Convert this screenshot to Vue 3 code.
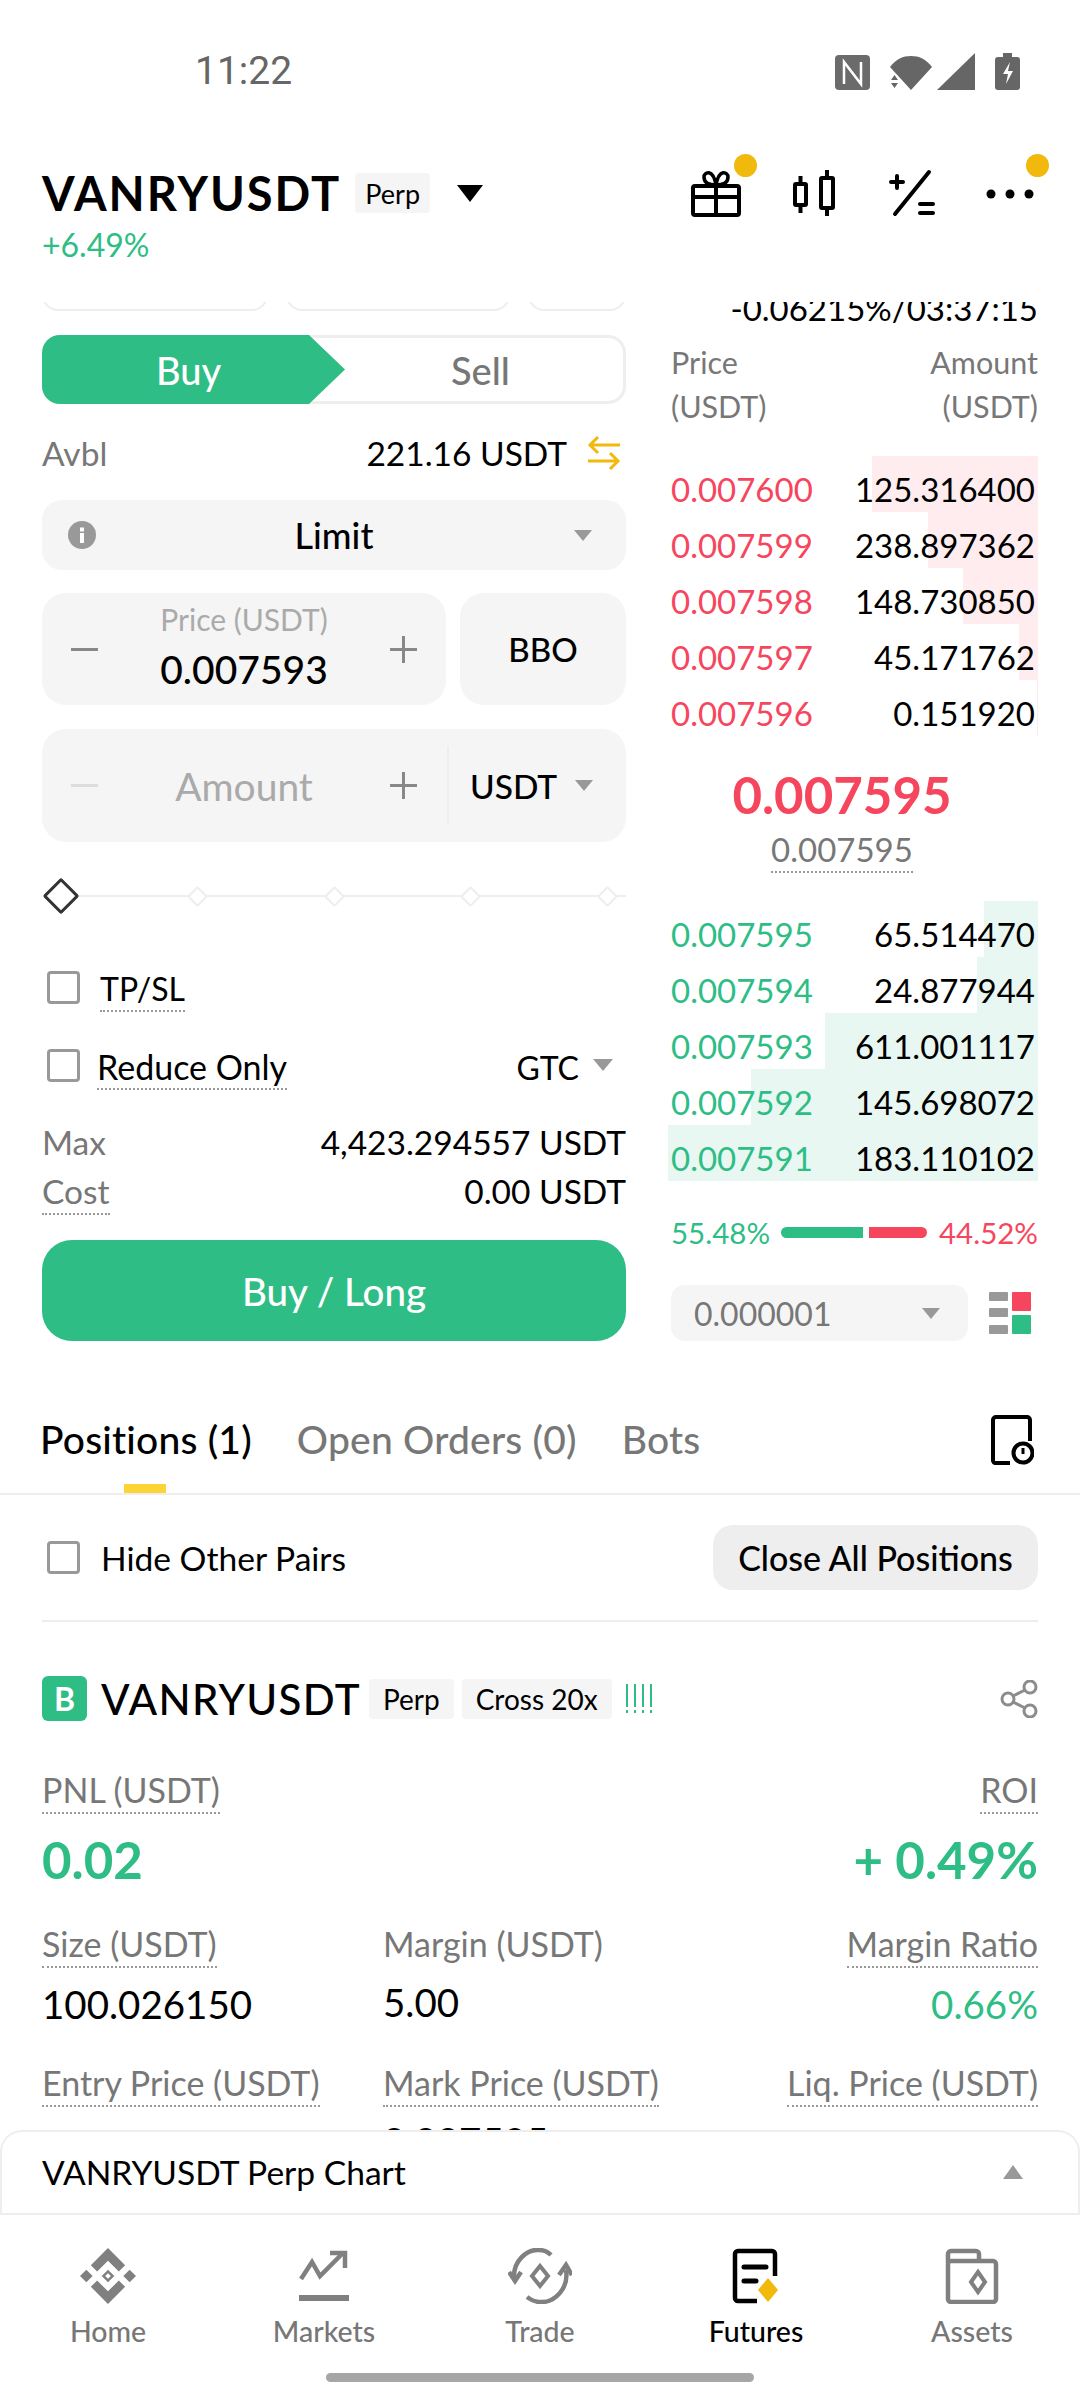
<script setup>
const asks = [
  { price: '0.007600', amount: '125.316400', depth: 166 },
  { price: '0.007599', amount: '238.897362', depth: 110 },
  { price: '0.007598', amount: '148.730850', depth: 75 },
  { price: '0.007597', amount: '45.171762', depth: 19 },
  { price: '0.007596', amount: '0.151920', depth: 1 },
]
const bids = [
  { price: '0.007595', amount: '65.514470', depth: 54 },
  { price: '0.007594', amount: '24.877944', depth: 61 },
  { price: '0.007593', amount: '611.001117', depth: 213 },
  { price: '0.007592', amount: '145.698072', depth: 287 },
  { price: '0.007591', amount: '183.110102', depth: 370 },
]
</script>

<template>
  <div class="screen">
    <header class="top">
      <div class="status">
        <span class="time">11:22</span>
        <div class="status-icons">
          <svg width="35" height="35" viewBox="0 0 35 35">
            <rect width="35" height="35" rx="4" fill="#6b6b6b" />
            <path d="M9 29V7l17 22V7" fill="none" stroke="#fff" stroke-width="2.500" />
          </svg>
          <svg class="wifi" width="42" height="35" viewBox="0 0 42 35">
            <path d="M0 12C6 4 13 1 21 1s15 3 21 11L21 35z" fill="#666" />
            <path d="M1 25l3.500-5 3.500 5zM1 28h7l-3.500 5z" fill="#666" />
          </svg>
          <svg class="signal" width="38" height="37" viewBox="0 0 38 37">
            <path d="M38 0v37H0z" fill="#666" />
          </svg>
          <svg class="battery" width="25" height="37" viewBox="0 0 25 37">
            <path d="M8 0h9v4h5a3 3 0 0 1 3 3v27a3 3 0 0 1-3 3H3a3 3 0 0 1-3-3V7a3 3 0 0 1 3-3h5z" fill="#666" />
            <path d="M15 9l-7 12h5l-2 10 7-13h-5z" fill="#fff" />
          </svg>
        </div>
      </div>
      <div class="title-row">
        <span class="pair">VANRYUSDT</span>
        <span class="tag tag-head">Perp</span>
        <span class="head-caret"></span>
        <div class="head-icons">
          <div class="head-icon">
            <svg class="gift" width="52" height="48" viewBox="0 0 52 48" fill="none" stroke="#000" stroke-width="4">
              <rect x="3" y="17" width="46" height="29" rx="2" />
              <path d="M3 28h46M26 10v36" />
              <path d="M26 16c-8 0-12-3-12-8s9-9 12 8c3-17 12-13 12-8s-4 8-12 8z" stroke-width="3.500" />
            </svg>
            <span class="dot dot-gift"></span>
          </div>
          <div class="head-icon">
            <svg width="48" height="48" viewBox="0 0 48 48" fill="none" stroke="#000" stroke-width="4">
              <rect x="5" y="15" width="11" height="21" rx="1" />
              <path d="M10.500 7v8M10.500 36v8" />
              <rect x="31" y="9" width="12" height="30" rx="1" />
              <path d="M37 1v8M37 39v8" />
            </svg>
          </div>
          <div class="head-icon">
            <svg width="48" height="48" viewBox="0 0 48 48" fill="none" stroke="#000" stroke-width="4" stroke-linecap="round">
              <path d="M41 3 7 45M9 7v12M3 13h12" />
              <path d="M32 35h13M32 44h13" stroke-width="4" />
            </svg>
          </div>
          <div class="head-icon">
            <svg width="48" height="48" viewBox="0 0 48 48" fill="#000">
              <circle cx="5" cy="25" r="4.500" />
              <circle cx="24" cy="25" r="4.500" />
              <circle cx="43" cy="25" r="4.500" />
            </svg>
            <span class="dot dot-more"></span>
          </div>
        </div>
      </div>
      <div class="change">+6.49%</div>
    </header>

    <main class="scroll">
      <div class="trade">
        <section class="form">
          <div class="chips">
            <span class="chip chip-a"></span>
            <span class="chip chip-b"></span>
            <span class="chip chip-c"></span>
          </div>
          <div class="side">
            <span class="side-buy">Buy</span>
            <span class="side-sell">Sell</span>
          </div>
          <div class="row avbl">
            <span class="muted">Avbl</span>
            <span class="avbl-val">
              221.16 USDT
              <svg width="34" height="34" viewBox="0 0 34 34" fill="none" stroke="#F0B90B" stroke-width="3">
                <path d="M33 9H3M11 1 3 9l8 8" />
                <path d="M1 25h30M23 17l8 8-8 8" />
              </svg>
            </span>
          </div>
          <div class="limit">
            <svg class="info" width="28" height="28" viewBox="0 0 28 28">
              <circle cx="14" cy="14" r="14" fill="#999" />
              <rect x="12" y="12" width="4" height="10" fill="#fff" />
              <rect x="12" y="6.500" width="4" height="4" fill="#fff" />
            </svg>
            <span class="limit-text">Limit</span>
            <span class="caret limit-caret"></span>
          </div>
          <div class="price-row">
            <div class="stepper price-box">
              <svg class="step" viewBox="0 0 27 27" stroke="#888" stroke-width="3"><path d="M0 13.500h27" /></svg>
              <div class="step-mid">
                <span class="step-label">Price (USDT)</span>
                <span class="step-val">0.007593</span>
              </div>
              <svg class="step" viewBox="0 0 27 27" stroke="#888" stroke-width="3"><path d="M0 13.500h27M13.500 0v27" /></svg>
            </div>
            <div class="bbo">BBO</div>
          </div>
          <div class="stepper amount-box">
            <svg class="step" viewBox="0 0 27 27" stroke="#ddd" stroke-width="3"><path d="M0 13.500h27" /></svg>
            <div class="step-mid"><span class="amount-ph">Amount</span></div>
            <svg class="step" viewBox="0 0 27 27" stroke="#888" stroke-width="3"><path d="M0 13.500h27M13.500 0v27" /></svg>
            <span class="amount-div"></span>
            <span class="unit">USDT</span>
            <span class="caret"></span>
          </div>
          <div class="slider">
            <span class="node"><i class="dia dia-on"></i></span>
            <span v-for="n in 4" :key="n" class="node"><i class="dia"></i></span>
          </div>
          <div class="check-row tp">
            <span class="box"></span>
            <span class="dotted">TP/SL</span>
          </div>
          <div class="check-row reduce">
            <span class="box"></span>
            <span class="dotted">Reduce Only</span>
            <span class="gtc">GTC<span class="caret gtc-caret"></span></span>
          </div>
          <div class="row max">
            <span class="muted">Max</span>
            <span>4,423.294557 USDT</span>
          </div>
          <div class="row cost">
            <span class="muted dotted">Cost</span>
            <span>0.00 USDT</span>
          </div>
          <div class="buy-btn">Buy / Long</div>
        </section>

        <section class="book">
          <div class="funding">-0.06215%/03:37:15</div>
          <div class="book-head">
            <span>Price<br />(USDT)</span>
            <span class="right">Amount<br />(USDT)</span>
          </div>
          <div class="rows asks">
            <div v-for="a in asks" :key="a.price" class="book-row">
              <span class="depth depth-ask" :style="{ width: a.depth + 'px' }"></span>
              <span class="p-ask">{{ a.price }}</span>
              <span>{{ a.amount }}</span>
            </div>
          </div>
          <div class="last">0.007595</div>
          <div class="mark"><span class="dotted">0.007595</span></div>
          <div class="rows bids">
            <div v-for="b in bids" :key="b.price" class="book-row">
              <span class="depth depth-bid" :style="{ width: b.depth + 'px' }"></span>
              <span class="p-bid">{{ b.price }}</span>
              <span>{{ b.amount }}</span>
            </div>
          </div>
          <div class="ratio">
            <span class="p-bid">55.48%</span>
            <span class="bar bar-g"></span>
            <span class="bar bar-r"></span>
            <span class="p-ask">44.52%</span>
          </div>
          <div class="tick-row">
            <div class="tick">
              <span>0.000001</span>
              <span class="caret"></span>
            </div>
            <svg width="42" height="42" viewBox="0 0 42 42">
              <rect y="0" width="19" height="9" rx="1" fill="#999" />
              <rect y="16" width="19" height="9" rx="1" fill="#999" />
              <rect y="33" width="19" height="9" rx="1" fill="#999" />
              <rect x="23" y="0" width="19" height="19" rx="1" fill="#F6465D" />
              <rect x="23" y="23" width="19" height="19" rx="1" fill="#2EBD85" />
            </svg>
          </div>
        </section>
      </div>

      <nav class="tabs">
        <span class="tab tab-on">Positions (1)</span>
        <span class="tab">Open Orders (0)</span>
        <span class="tab">Bots</span>
        <svg class="tab-icon" width="44" height="50" viewBox="0 0 44 50" fill="none" stroke="#000" stroke-width="4">
          <path d="M20 48H5a3 3 0 0 1-2-2V5a3 3 0 0 1 3-3h31a3 3 0 0 1 3 3v21" />
          <circle cx="33" cy="38" r="9.500" />
          <path d="M33 33v6" stroke-width="3" />
        </svg>
      </nav>
      <div class="filter">
        <span class="box"></span>
        <span class="filter-text">Hide Other Pairs</span>
        <span class="close-all">Close All Positions</span>
      </div>
      <div class="divider"></div>

      <div class="pos-head">
        <span class="badge">B</span>
        <span class="pos-pair">VANRYUSDT</span>
        <span class="tag">Perp</span>
        <span class="tag">Cross 20x</span>
        <svg class="bars" width="28" height="30" viewBox="0 0 28 30" stroke="#2EBD85" stroke-width="2">
          <path d="M2 0v23M2 26v3M10 0v23M10 26v3M18 0v23M18 26v3M26 0v23M26 26v3" />
        </svg>
        <svg class="share" width="38" height="38" viewBox="0 0 38 38" fill="none" stroke="#8c8c8c" stroke-width="3">
          <circle cx="8" cy="19" r="6" />
          <circle cx="30" cy="7" r="6" />
          <circle cx="30" cy="31" r="6" />
          <path d="M13 16l12-6M13 22l12 6" />
        </svg>
      </div>
      <div class="pnl-labels">
        <span class="muted dotted">PNL (USDT)</span>
        <span class="muted dotted">ROI</span>
      </div>
      <div class="pnl-vals">
        <span>0.02</span>
        <span>+ 0.49%</span>
      </div>
      <div class="cols labels-1">
        <span class="muted dotted">Size (USDT)</span>
        <span class="muted">Margin (USDT)</span>
        <span class="muted dotted">Margin Ratio</span>
      </div>
      <div class="cols vals-1">
        <span>100.026150</span>
        <span class="mid-val">5.00</span>
        <span class="p-bid">0.66%</span>
      </div>
      <div class="cols labels-2">
        <span class="muted dotted">Entry Price (USDT)</span>
        <span class="muted dotted">Mark Price (USDT)</span>
        <span class="muted dotted">Liq. Price (USDT)</span>
      </div>
      <div class="cols vals-2">
        <span></span>
        <span>0.007595</span>
        <span></span>
      </div>

      <div class="chart-bar">
        <span>VANRYUSDT Perp Chart</span>
        <span class="caret-up"></span>
      </div>
    </main>

    <footer class="nav">
      <div class="nav-item">
        <svg width="56" height="56" viewBox="0 0 24 24">
          <path fill="#808080" d="M16.624 13.920l2.717 2.716-7.353 7.353-7.352-7.352 2.717-2.717 4.635 4.654 4.636-4.654zm4.637-4.636L24 12l-2.715 2.716L18.568 12l2.693-2.716zm-9.272.001l2.716 2.692-2.717 2.717-2.692-2.692V12l.67-.67.02-.02 2.003-2.025zm-9.272-.001L5.410 12l-2.692 2.692L0 12l2.717-2.716zM11.990.010l7.352 7.330-2.717 2.715-4.636-4.630-4.635 4.654-2.717-2.716L11.989.011z" />
          <path fill="#fff" d="M12 10.800l1.200 1.200-1.200 1.200-1.200-1.200z" />
        </svg>
        <span>Home</span>
      </div>
      <div class="nav-item">
        <svg width="56" height="56" viewBox="0 0 56 56" fill="none" stroke="#808080" stroke-width="5">
          <path d="M5 31 16 14l8 14L46 6" stroke-width="4.500" />
          <path d="M34 5h15v15" stroke-width="4.500" />
          <path d="M3 50h50" stroke-width="6" />
        </svg>
        <span>Markets</span>
      </div>
      <div class="nav-item">
        <svg width="64" height="56" viewBox="0 0 64 56" fill="none" stroke="#808080" stroke-width="4.500">
          <path d="M6 30C5 14 18 1 31 2c5 0 9 2 12 5" />
          <path d="M58 22c3 18-11 33-26 32-5 0-9-2-13-5" />
          <path d="M1 24l6 9 6-9M51 27l7-10 6 10" />
          <path d="M32 18l8 10-8 10-8-10z" stroke-width="4" />
        </svg>
        <span>Trade</span>
      </div>
      <div class="nav-item nav-on">
        <svg width="48" height="56" viewBox="0 0 48 56" fill="none" stroke="#000" stroke-width="4.500">
          <path d="M25 53H6a3 3 0 0 1-3-3V6a3 3 0 0 1 3-3h34a3 3 0 0 1 3 3v22" />
          <path d="M12 19h22M12 33h12" stroke-width="5" stroke-linecap="round" />
          <path d="M36 35l10 12-10 12-10-12z" fill="#F0B90B" stroke="none" transform="translate(0 -5)" />
        </svg>
        <span>Futures</span>
      </div>
      <div class="nav-item">
        <svg width="54" height="56" viewBox="0 0 54 56" fill="none" stroke="#808080" stroke-width="4.500">
          <rect x="3" y="13" width="48" height="41" rx="3" />
          <path d="M3 15V6a3 3 0 0 1 3-3h25a3 3 0 0 1 3 3v7" />
          <path d="M33 24l7 10-7 10-7-10z" stroke-width="4" />
        </svg>
        <span>Assets</span>
      </div>
      <div class="gesture"></div>
    </footer>
  </div>
</template>

<style>
html,
body {
  margin: 0;
  background: #fff;
}
</style>

<style scoped>
.screen {
  width: 1080px;
  height: 2400px;
  overflow: hidden;
  font-family: Lato, 'Liberation Sans', sans-serif;
  font-size: 33px;
  color: #000;
  background: #fff;
}
.top {
  height: 302px;
  padding: 0 42px;
  box-sizing: border-box;
}
.status {
  display: flex;
  justify-content: space-between;
  height: 90px;
  padding-top: 51px;
  box-sizing: border-box;
}
.time {
  margin-left: 153px;
  font-family: Roboto, sans-serif;
  font-size: 39px;
  line-height: 40px;
  color: #666;
}
.status-icons {
  display: flex;
  align-items: flex-start;
  margin-top: 4px;
  margin-right: 18px;
}
.wifi {
  margin-left: 20px;
}
.signal {
  margin-left: 5px;
  margin-top: -2px;
}
.battery {
  margin-left: 20px;
  margin-top: -2px;
}
.title-row {
  display: flex;
  align-items: center;
  height: 52px;
  margin-top: 77px;
}
.pair {
  font-size: 47px;
  font-weight: 700;
  letter-spacing: 2px;
  line-height: 52px;
}
.tag {
  display: inline-flex;
  align-items: center;
  height: 40px;
  padding: 0 14px;
  margin-left: 8px;
  border-radius: 4px;
  background: #f5f5f5;
  font-size: 28px;
}
.tag-head {
  margin-left: 14px;
  padding: 0 10px;
  font-size: 27px;
}
.head-caret {
  width: 0;
  height: 0;
  margin-left: 27px;
  border-left: 13px solid transparent;
  border-right: 13px solid transparent;
  border-top: 17px solid #000;
}
.head-icons {
  display: flex;
  gap: 50px;
  margin-left: auto;
  margin-right: 4px;
}
.head-icon {
  position: relative;
  display: flex;
  width: 48px;
  height: 48px;
}
.head-icon svg {
  flex-shrink: 0;
}
.head-icon .gift {
  margin-left: -2px;
}
.dot {
  position: absolute;
  width: 23px;
  height: 23px;
  border-radius: 50%;
  background: #F0B90B;
}
.dot-gift {
  left: 42px;
  top: -15px;
}
.dot-more {
  left: 40px;
  top: -15px;
}
.change {
  margin-top: 6px;
  font-size: 32px;
  line-height: 40px;
  color: #2EBD85;
}
.scroll {
  position: relative;
  height: 1911px;
  overflow: hidden;
}
.trade {
  display: grid;
  grid-template-columns: 584px 368px;
  gap: 44px;
  padding: 0 42px;
}
.chips {
  display: flex;
  gap: 18px;
  height: 60px;
  margin-top: -51px;
}
.chip {
  height: 60px;
  box-sizing: border-box;
  border: 2px solid #eee;
  border-radius: 16px;
}
.chip-a {
  width: 226px;
}
.chip-b {
  width: 224px;
}
.chip-c {
  width: 98px;
}
.side {
  position: relative;
  display: flex;
  align-items: center;
  height: 69px;
  margin-top: 24px;
  box-sizing: border-box;
  border: 3px solid #eee;
  border-radius: 18px;
}
.side-buy {
  position: absolute;
  left: -3px;
  top: -3px;
  display: flex;
  align-items: center;
  justify-content: center;
  width: 303px;
  height: 69px;
  box-sizing: border-box;
  padding-right: 10px;
  background: #2EBD85;
  border-radius: 18px;
  clip-path: polygon(0 0, 267px 0, 303px 34.500px, 267px 69px, 0 69px);
  color: #fff;
  font-size: 38px;
  font-weight: 500;
}
.side-sell {
  margin-left: 406px;
  color: #777;
  font-size: 38px;
  font-weight: 500;
}
.row {
  display: flex;
  justify-content: space-between;
  font-size: 33.500px;
}
.muted {
  color: #777;
}
.avbl {
  align-items: center;
  height: 40px;
  margin-top: 29px;
}
.avbl-val {
  display: flex;
  align-items: center;
  gap: 20px;
  margin-right: 5px;
}
.limit {
  position: relative;
  display: flex;
  align-items: center;
  justify-content: center;
  height: 70px;
  margin-top: 27px;
  border-radius: 20px;
  background: #f5f5f5;
}
.limit-text {
  font-size: 36px;
  font-weight: 500;
}
.info {
  position: absolute;
  left: 26px;
}
.limit-caret {
  position: absolute;
  right: 34px;
}
.caret {
  display: inline-block;
  width: 0;
  height: 0;
  flex-shrink: 0;
  border-left: 9px solid transparent;
  border-right: 9px solid transparent;
  border-top: 11px solid #999;
}
.price-row {
  display: flex;
  gap: 14px;
  height: 112px;
  margin-top: 23px;
}
.stepper {
  display: flex;
  align-items: center;
  padding-left: 29px;
  box-sizing: border-box;
  border-radius: 24px;
  background: #f5f5f5;
}
.price-box {
  width: 404px;
}
.step {
  width: 27px;
  height: 27px;
  flex-shrink: 0;
}
.step-mid {
  display: flex;
  flex-direction: column;
  align-items: center;
  width: 292px;
  flex-shrink: 0;
}
.price-box .step-mid {
  padding-bottom: 6px;
}
.step-label {
  font-size: 30px;
  line-height: 36px;
  color: #aaa;
}
.step-val {
  margin-top: 10px;
  font-size: 39px;
  line-height: 44px;
  font-weight: 500;
}
.bbo {
  display: flex;
  flex: 1;
  align-items: center;
  justify-content: center;
  border-radius: 24px;
  background: #f5f5f5;
  font-size: 33px;
  font-weight: 500;
}
.amount-box {
  height: 113px;
  margin-top: 24px;
}
.amount-ph {
  font-size: 39px;
  color: #aaa;
}
.amount-div {
  width: 2px;
  height: 79px;
  margin-left: 30px;
  background: #eee;
}
.unit {
  margin-left: 21px;
  margin-right: 18px;
  font-size: 33.500px;
  font-weight: 500;
}
.slider {
  position: relative;
  display: flex;
  gap: 116.500px;
  align-items: center;
  height: 36px;
  margin-top: 36px;
  padding-left: 9px;
}
.slider::before {
  content: '';
  position: absolute;
  left: 20px;
  right: 0;
  top: 17px;
  height: 2px;
  background: #eee;
}
.node {
  position: relative;
  display: flex;
  align-items: center;
  justify-content: center;
  width: 20px;
  height: 20px;
}
.dia {
  display: block;
  flex-shrink: 0;
  width: 11px;
  height: 11px;
  border: 2.500px solid #eee;
  border-radius: 2px;
  background: #fff;
  transform: rotate(45deg);
}
.dia-on {
  width: 20px;
  height: 20px;
  border: 3px solid #333;
}
.check-row {
  display: flex;
  align-items: flex-start;
  height: 42px;
  font-size: 32px;
}
.tp {
  margin-top: 57px;
  padding-left: 5px;
}
.reduce {
  margin-top: 36px;
  padding-left: 5px;
}
.box {
  width: 33px;
  height: 33px;
  flex-shrink: 0;
  box-sizing: border-box;
  border: 3px solid #999;
  border-radius: 4px;
}
.dotted {
  display: inline-block;
  padding-bottom: 2px;
  border-bottom: 2px dotted #999;
}
.check-row .dotted {
  line-height: 36px;
  padding-bottom: 3px;
}
.tp .dotted {
  margin-left: 20px;
}
.reduce .dotted {
  margin-left: 17px;
  font-size: 34px;
}
.gtc {
  display: flex;
  align-items: center;
  gap: 14px;
  height: 36px;
  margin-left: auto;
  margin-right: 13px;
}
.gtc-caret {
  border-left-width: 10px;
  border-right-width: 10px;
  border-top-width: 12px;
  margin-top: -4px;
}
.max {
  margin-top: 31px;
  line-height: 40px;
}
.cost {
  margin-top: 9px;
  line-height: 40px;
}
.buy-btn {
  display: flex;
  align-items: center;
  justify-content: center;
  height: 101px;
  margin-top: 25px;
  border-radius: 30px;
  background: #2EBD85;
  color: #fff;
  font-size: 38.500px;
  font-weight: 500;
}
.book {
  font-size: 33px;
}
.funding {
  margin-top: -14px;
  font-size: 33px;
  line-height: 40px;
  text-align: right;
}
.book-head {
  display: flex;
  justify-content: space-between;
  margin-top: 12px;
  padding-left: 1px;
  color: #777;
  font-size: 30.500px;
  line-height: 44px;
}
.right {
  text-align: right;
}
.rows {
  margin-left: -2px;
}
.asks {
  margin-top: 28px;
}
.bids {
  margin-top: 28px;
}
.book-row {
  position: relative;
  display: flex;
  justify-content: space-between;
  height: 56px;
  padding: 10px 3px 0;
  box-sizing: border-box;
  line-height: 46px;
}
.book-row span:not(.depth) {
  position: relative;
}
.depth {
  position: absolute;
  top: 0;
  right: 0;
  bottom: 0;
}
.depth-ask {
  background: #FEECEE;
}
.depth-bid {
  background: #E8F7F2;
}
.p-ask {
  color: #F6465D;
}
.p-bid {
  color: #2EBD85;
}
.last {
  margin-top: 29px;
  padding-right: 24px;
  color: #F6465D;
  font-size: 51px;
  font-weight: 700;
  line-height: 60px;
  text-align: center;
}
.mark {
  margin-top: 4px;
  padding-right: 24px;
  color: #777;
  line-height: 40px;
  text-align: center;
}
.ratio {
  display: flex;
  align-items: center;
  height: 30px;
  margin-top: 36px;
  padding-left: 1px;
  font-size: 29.500px;
}
.bar {
  height: 11px;
}
.bar-g {
  width: 82px;
  margin-left: auto;
  border-radius: 6px 0 0 6px;
  background: #2EBD85;
}
.bar-r {
  width: 58px;
  margin-left: 6px;
  margin-right: 12px;
  border-radius: 0 6px 6px 0;
  background: #F6465D;
}
.tick-row {
  display: flex;
  align-items: center;
  justify-content: space-between;
  height: 56px;
  margin-top: 38px;
  padding-left: 1px;
}
.tick-row svg {
  margin-right: 7px;
}
.tick {
  display: flex;
  align-items: center;
  justify-content: space-between;
  width: 297px;
  height: 56px;
  padding: 0 28px 0 23px;
  box-sizing: border-box;
  border-radius: 14px;
  background: #f5f5f5;
  color: #777;
  font-size: 32px;
}
.tabs {
  display: flex;
  align-items: center;
  gap: 45px;
  height: 78px;
  margin-top: 74px;
  padding: 0 46px 0 40px;
  border-bottom: 2px solid #eee;
}
.tab {
  position: relative;
  display: flex;
  align-items: flex-start;
  height: 78px;
  color: #777;
  font-size: 39px;
  font-weight: 500;
  letter-spacing: 0.200px;
  line-height: 48px;
}
.tab-on {
  color: #000;
}
.tab-on::after {
  content: '';
  position: absolute;
  left: 84px;
  bottom: 0;
  width: 42px;
  height: 9px;
  background: #FCD535;
}
.tab-icon {
  margin-left: auto;
  margin-top: -28px;
}
.filter {
  display: flex;
  align-items: center;
  height: 65px;
  margin-top: 30px;
  padding: 0 42px 0 47px;
}
.filter-text {
  margin-left: 21px;
  font-size: 33.600px;
}
.close-all {
  display: flex;
  align-items: center;
  justify-content: center;
  width: 325px;
  height: 65px;
  margin-left: auto;
  border-radius: 20px;
  background: #eee;
  font-size: 34px;
  font-weight: 500;
}
.divider {
  height: 2px;
  margin: 30px 42px 0;
  background: #eee;
}
.pos-head {
  display: flex;
  align-items: center;
  height: 45px;
  margin-top: 54px;
  padding: 0 42px;
}
.badge {
  display: flex;
  align-items: center;
  justify-content: center;
  width: 45px;
  height: 45px;
  border-radius: 6px;
  background: #2EBD85;
  color: #fff;
  font-size: 32px;
  font-weight: 700;
}
.pos-pair {
  margin-left: 14px;
  font-size: 42px;
  font-weight: 500;
  letter-spacing: 1.300px;
}
.bars {
  margin-left: 13px;
}
.share {
  margin-left: auto;
}
.pnl-labels {
  display: flex;
  justify-content: space-between;
  margin-top: 49px;
  padding: 0 42px;
  font-size: 34px;
  line-height: 40px;
}
.pnl-vals {
  display: flex;
  justify-content: space-between;
  margin-top: 16px;
  padding: 0 42px;
  color: #2EBD85;
  font-size: 51px;
  font-weight: 700;
  line-height: 60px;
}
.cols {
  display: grid;
  grid-template-columns: 341px 1fr auto;
  align-items: start;
  justify-items: start;
  padding: 0 42px;
  font-size: 34px;
  line-height: 40px;
}
.labels-1 {
  margin-top: 34px;
}
.vals-1 {
  margin-top: 13px;
  font-size: 38.500px;
  line-height: 46px;
}
.mid-val {
  margin-top: -2px;
}
.labels-2 {
  margin-top: 36px;
}
.vals-2 {
  margin-top: 11px;
  font-size: 38.500px;
  line-height: 46px;
}
.chart-bar {
  position: absolute;
  left: 0;
  right: 0;
  bottom: 0;
  display: flex;
  align-items: center;
  justify-content: space-between;
  height: 83px;
  padding: 0 55px 2px 40px;
  box-sizing: border-box;
  border: 2px solid #eee;
  border-bottom: 0;
  border-radius: 22px 22px 0 0;
  background: #fff;
  font-size: 33.600px;
}
.caret-up {
  width: 0;
  height: 0;
  border-left: 10px solid transparent;
  border-right: 10px solid transparent;
  border-bottom: 14px solid #999;
}
.nav {
  position: relative;
  display: grid;
  grid-template-columns: repeat(5, 216px);
  height: 187px;
  box-sizing: border-box;
  border-top: 2px solid #eee;
}
.nav-item {
  display: flex;
  flex-direction: column;
  align-items: center;
  height: 120px;
  padding-top: 33px;
  color: #777;
  font-size: 28.500px;
  font-weight: 500;
}
.nav-item span {
  margin-top: 11px;
  line-height: 32px;
}
.nav-on {
  color: #000;
}
.gesture {
  position: absolute;
  left: 326px;
  top: 158px;
  width: 428px;
  height: 9px;
  border-radius: 5px;
  background: #a6a6a6;
}
</style>
